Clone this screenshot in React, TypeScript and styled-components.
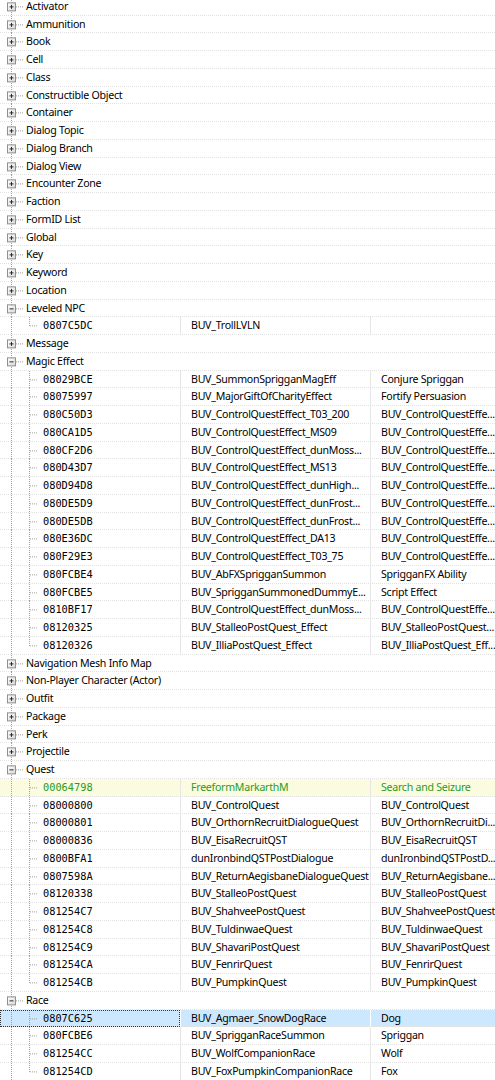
import React from "react";
import styled, { createGlobalStyle, css } from "styled-components";

const ROW_H = 17.75;

const GlobalStyle = createGlobalStyle`
  html, body { margin: 0; padding: 0; background: #ffffff; overflow: hidden; }
  body { width: 495px; height: 1080px; }
  #root { width: 495px; height: 1080px; overflow: hidden; }
`;

type Variant = "normal" | "injected" | "selected";
type Child = { id: string; edid: string; name?: string; variant?: Variant };
type Group = { label: string; children?: Child[] };

const ce = "BUV_ControlQuestEffe...";

const groups: Group[] = [
  { label: "Activator" },
  { label: "Ammunition" },
  { label: "Book" },
  { label: "Cell" },
  { label: "Class" },
  { label: "Constructible Object" },
  { label: "Container" },
  { label: "Dialog Topic" },
  { label: "Dialog Branch" },
  { label: "Dialog View" },
  { label: "Encounter Zone" },
  { label: "Faction" },
  { label: "FormID List" },
  { label: "Global" },
  { label: "Key" },
  { label: "Keyword" },
  { label: "Location" },
  { label: "Leveled NPC", children: [{ id: "0807C5DC", edid: "BUV_TrollLVLN" }] },
  { label: "Message" },
  {
    label: "Magic Effect",
    children: [
      { id: "08029BCE", edid: "BUV_SummonSprigganMagEff", name: "Conjure Spriggan" },
      { id: "08075997", edid: "BUV_MajorGiftOfCharityEffect", name: "Fortify Persuasion" },
      { id: "080C50D3", edid: "BUV_ControlQuestEffect_T03_200", name: ce },
      { id: "080CA1D5", edid: "BUV_ControlQuestEffect_MS09", name: ce },
      { id: "080CF2D6", edid: "BUV_ControlQuestEffect_dunMoss...", name: ce },
      { id: "080D43D7", edid: "BUV_ControlQuestEffect_MS13", name: ce },
      { id: "080D94D8", edid: "BUV_ControlQuestEffect_dunHigh...", name: ce },
      { id: "080DE5D9", edid: "BUV_ControlQuestEffect_dunFrost...", name: ce },
      { id: "080DE5DB", edid: "BUV_ControlQuestEffect_dunFrost...", name: ce },
      { id: "080E36DC", edid: "BUV_ControlQuestEffect_DA13", name: ce },
      { id: "080F29E3", edid: "BUV_ControlQuestEffect_T03_75", name: ce },
      { id: "080FCBE4", edid: "BUV_AbFXSprigganSummon", name: "SprigganFX Ability" },
      { id: "080FCBE5", edid: "BUV_SprigganSummonedDummyE...", name: "Script Effect" },
      { id: "0810BF17", edid: "BUV_ControlQuestEffect_dunMoss...", name: ce },
      { id: "08120325", edid: "BUV_StalleoPostQuest_Effect", name: "BUV_StalleoPostQuest..." },
      { id: "08120326", edid: "BUV_IlliaPostQuest_Effect", name: "BUV_IlliaPostQuest_Eff..." },
    ],
  },
  { label: "Navigation Mesh Info Map" },
  { label: "Non-Player Character (Actor)" },
  { label: "Outfit" },
  { label: "Package" },
  { label: "Perk" },
  { label: "Projectile" },
  {
    label: "Quest",
    children: [
      { id: "00064798", edid: "FreeformMarkarthM", name: "Search and Seizure", variant: "injected" },
      { id: "08000800", edid: "BUV_ControlQuest", name: "BUV_ControlQuest" },
      { id: "08000801", edid: "BUV_OrthornRecruitDialogueQuest", name: "BUV_OrthornRecruitDi..." },
      { id: "08000836", edid: "BUV_EisaRecruitQST", name: "BUV_EisaRecruitQST" },
      { id: "0800BFA1", edid: "dunIronbindQSTPostDialogue", name: "dunIronbindQSTPostD..." },
      { id: "0807598A", edid: "BUV_ReturnAegisbaneDialogueQuest", name: "BUV_ReturnAegisbane..." },
      { id: "08120338", edid: "BUV_StalleoPostQuest", name: "BUV_StalleoPostQuest" },
      { id: "081254C7", edid: "BUV_ShahveePostQuest", name: "BUV_ShahveePostQuest" },
      { id: "081254C8", edid: "BUV_TuldinwaeQuest", name: "BUV_TuldinwaeQuest" },
      { id: "081254C9", edid: "BUV_ShavariPostQuest", name: "BUV_ShavariPostQuest" },
      { id: "081254CA", edid: "BUV_FenrirQuest", name: "BUV_FenrirQuest" },
      { id: "081254CB", edid: "BUV_PumpkinQuest", name: "BUV_PumpkinQuest" },
    ],
  },
  {
    label: "Race",
    children: [
      { id: "0807C625", edid: "BUV_Agmaer_SnowDogRace", name: "Dog", variant: "selected" },
      { id: "080FCBE6", edid: "BUV_SprigganRaceSummon", name: "Spriggan" },
      { id: "081254CC", edid: "BUV_WolfCompanionRace", name: "Wolf" },
      { id: "081254CD", edid: "BUV_FoxPumpkinCompanionRace", name: "Fox" },
    ],
  },
];

const Tree = styled.div`
  width: 495px;
  margin-top: -2.2px;
  font-family: "Noto Sans", "Open Sans", sans-serif;
  font-size: 10.6px;
  letter-spacing: -0.26px;
  color: #000000;
`;

const Row = styled.div<{ $variant?: Variant }>`
  display: grid;
  grid-template-columns: 180px 190px 1fr;
  height: ${ROW_H}px;
  line-height: ${ROW_H}px;
  box-sizing: border-box;
  background-image: linear-gradient(to right, #e2e2e2 50%, transparent 50%);
  background-size: 2px 1px;
  background-repeat: repeat-x;
  background-position: 0 100%;
  ${(p) =>
    p.$variant === "injected" &&
    css`
      background-color: #fbfbdf;
      color: #2a9a2a;
    `}
  ${(p) =>
    p.$variant === "selected" &&
    css`
      background-color: #cce8ff;
    `}
`;

const TreeCell = styled.div<{ $focus?: boolean; $span?: boolean }>`
  display: flex;
  align-items: stretch;
  min-width: 0;
  white-space: nowrap;
  overflow: hidden;
  box-sizing: border-box;
  ${(p) => p.$span && css`grid-column: 1 / -1;`}
  ${(p) =>
    p.$focus &&
    css`
      outline: 1px dotted #333;
      outline-offset: -1px;
    `}
`;

const Label = styled.span`
  padding-left: 2px;
`;

const IdText = styled.span`
  font-family: "DejaVu Sans Mono", "Liberation Mono", monospace;
  font-size: 10.3px;
  letter-spacing: 0;
  padding-left: 1px;
`;

const DataCell = styled.div<{ $variant?: Variant }>`
  border-left: 1px solid ${(p) => (p.$variant === "selected" ? "#ffffff" : "#e6e6e6")};
  padding-left: 10px;
  white-space: nowrap;
  overflow: hidden;
  min-width: 0;
`;

const Guides = styled.svg`
  flex: none;
  display: block;
`;

const LINE = "#a0a0a0";

function CategoryGuides({ expanded }: { expanded: boolean }) {
  const mid = ROW_H / 2;
  return (
    <Guides width={24} height={ROW_H} viewBox={`0 0 24 ${ROW_H}`}>
      <line x1={11.5} y1={0} x2={11.5} y2={ROW_H} stroke={LINE} strokeDasharray="1 1" />
      <line x1={16} y1={mid} x2={23} y2={mid} stroke={LINE} strokeDasharray="1 1" />
      <defs>
        <linearGradient id="exp" x1="0" y1="0" x2="1" y2="1">
          <stop offset="0" stopColor="#ffffff" />
          <stop offset="1" stopColor="#d8d8d8" />
        </linearGradient>
      </defs>
      <rect x={7.5} y={mid - 4} width={8} height={8} fill="url(#exp)" stroke="#8f8f8f" />
      <line x1={9.5} y1={mid} x2={13.5} y2={mid} stroke="#2b2b2b" />
      {!expanded && <line x1={11.5} y1={mid - 2} x2={11.5} y2={mid + 2} stroke="#2b2b2b" />}
    </Guides>
  );
}

function ChildGuides({ last }: { last: boolean }) {
  const mid = ROW_H / 2;
  return (
    <Guides width={42} height={ROW_H} viewBox={`0 0 42 ${ROW_H}`}>
      <line x1={11.5} y1={0} x2={11.5} y2={ROW_H} stroke={LINE} strokeDasharray="1 1" />
      <line x1={29.5} y1={0} x2={29.5} y2={last ? mid : ROW_H} stroke={LINE} strokeDasharray="1 1" />
      <line x1={30} y1={mid} x2={38} y2={mid} stroke={LINE} strokeDasharray="1 1" />
    </Guides>
  );
}

function ChildRow({ c, last }: { c: Child; last: boolean }) {
  return (
    <Row $variant={c.variant}>
      <TreeCell $focus={c.variant === "selected"}>
        <ChildGuides last={last} />
        <IdText>{c.id}</IdText>
      </TreeCell>
      <DataCell $variant={c.variant}>{c.edid}</DataCell>
      <DataCell $variant={c.variant}>{c.name ?? ""}</DataCell>
    </Row>
  );
}

export default function App() {
  return (
    <>
      <GlobalStyle />
      <Tree>
        {groups.map((g) => (
          <React.Fragment key={g.label}>
            <Row>
              <TreeCell $span>
                <CategoryGuides expanded={!!g.children} />
                <Label>{g.label}</Label>
              </TreeCell>
            </Row>
            {g.children?.map((c, i) => (
              <ChildRow key={c.id} c={c} last={i === g.children!.length - 1} />
            ))}
          </React.Fragment>
        ))}
      </Tree>
    </>
  );
}
